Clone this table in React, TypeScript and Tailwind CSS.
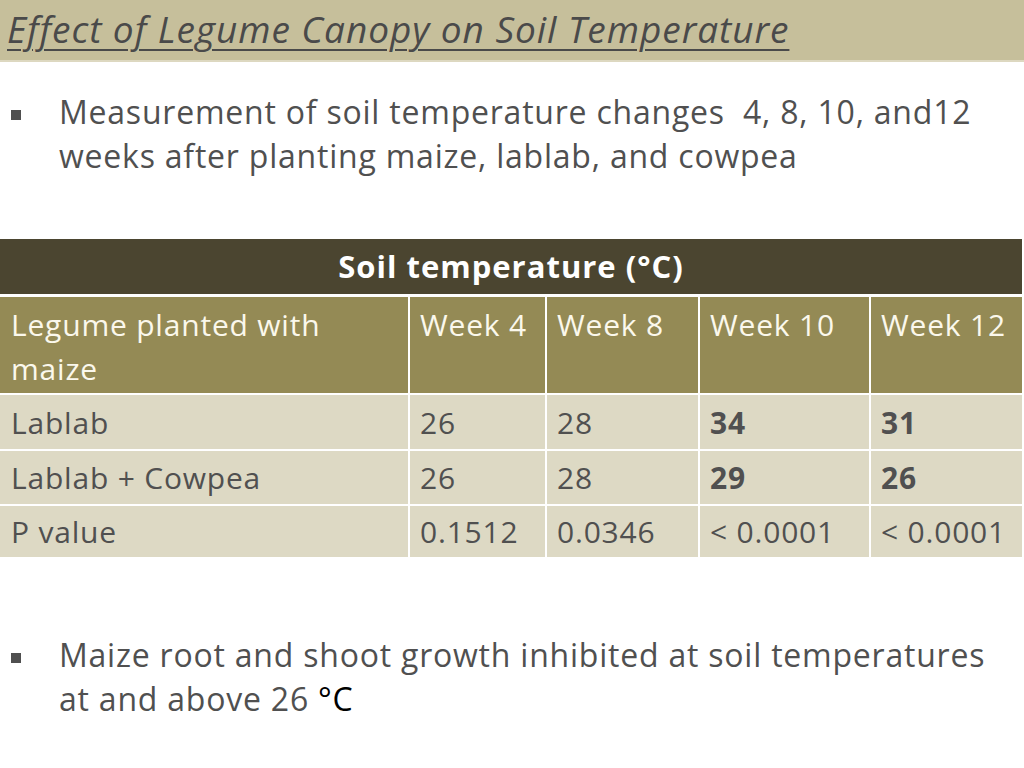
import React from 'react';

const rows = [
    { name: 'Lablab', values: ['26', '28', '34', '31'], h: 'h-[54px]' },
    { name: 'Lablab + Cowpea', values: ['26', '28', '29', '26'], h: 'h-[53px]' },
    { name: 'P value', values: ['0.1512', '0.0346', '< 0.0001', '< 0.0001'], h: 'h-[51px]' },
];

const weeks = ['Week 4', 'Week 8', 'Week 10', 'Week 12'];

export default function App() {
    return (
        <div className="w-[1024px] h-[768px] bg-white overflow-hidden text-[#505050] font-['Open_Sans',sans-serif]">
            {/* Title bar */}
            <div className="h-[62px] bg-[#c6bf9b] border-b-2 border-[#ddd8c0] px-[7px] pt-[5px]">
                <h1 className="text-[37px] leading-[48px] italic underline decoration-[2px] underline-offset-[6px] text-[#4a4a4a] tracking-[0.95px] whitespace-nowrap">
                    Effect of Legume Canopy on Soil Temperature
                </h1>
            </div>

            {/* First bullet */}
            <div className="flex pt-[28px] pl-[11px] pr-[10px]">
                <div className="w-[10px] h-[10px] bg-[#4f4f4f] mt-[20px] shrink-0" />
                <p className="ml-[38px] text-[32px] leading-[44px] tracking-[0.78px] whitespace-nowrap">
                    Measurement of soil temperature changes&nbsp; 4, 8, 10, and12
                    <br />
                    weeks after planting maize, lablab, and cowpea
                </p>
            </div>

            {/* Table */}
            <div className="mt-[61px] w-[1022px] flex flex-col gap-[2px] text-[30px] tracking-[0.8px]">
                <div className="h-[55px] bg-[#4b4530] text-white font-bold text-[31px] tracking-[1px] flex items-center justify-center mb-[1px]">
                    Soil temperature (°C)
                </div>
                <div className="grid grid-cols-[408px_135px_151px_169px_151px] gap-[2px] h-[96px]">
                    <div className="bg-[#948a55] text-[#fbf8ec] px-[11px] pt-[6px] leading-[44px] whitespace-nowrap">
                        Legume planted with
                        <br />
                        maize
                    </div>
                    {weeks.map((w) => (
                        <div key={w} className="bg-[#948a55] text-[#fbf8ec] px-[10px] pt-[6px] leading-[44px] whitespace-nowrap">
                            {w}
                        </div>
                    ))}
                </div>
                {rows.map((r) => (
                    <div key={r.name} className={`grid grid-cols-[408px_135px_151px_169px_151px] gap-[2px] ${r.h}`}>
                        <div className="bg-[#ddd9c4] px-[11px] flex items-center">{r.name}</div>
                        {r.values.map((v, i) => (
                            <div
                                key={i}
                                className={`bg-[#ddd9c4] px-[10px] flex items-center whitespace-nowrap ${
                                    i >= 2 && r.name !== 'P value' ? 'font-bold' : ''
                                }`}
                            >
                                {v}
                            </div>
                        ))}
                    </div>
                ))}
            </div>

            {/* Second bullet */}
            <div className="flex pt-[76px] pl-[11px] pr-[10px]">
                <div className="w-[10px] h-[10px] bg-[#4f4f4f] mt-[20px] shrink-0" />
                <p className="ml-[38px] text-[32px] leading-[44px] tracking-[0.78px] whitespace-nowrap">
                    Maize root and shoot growth inhibited at soil temperatures
                    <br />
                    at and above 26 <span className="text-black">°C</span>
                </p>
            </div>
        </div>
    );
}
